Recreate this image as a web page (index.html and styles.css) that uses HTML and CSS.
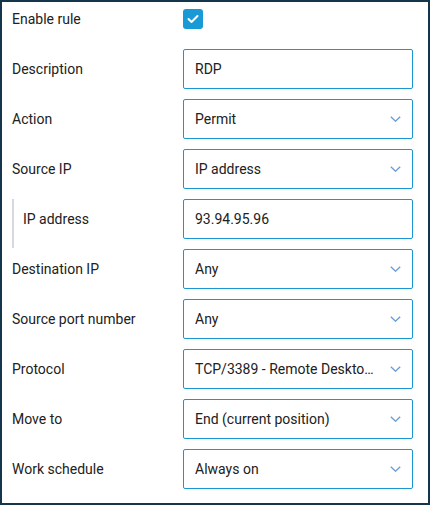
FILE: index.html
```html
<!DOCTYPE html>
<html>
<head>
<meta charset="utf-8">
<link rel="stylesheet" href="styles.css">
</head>
<body>
<div class="frame">
  <div class="row row-first">
    <div class="label">Enable rule</div>
    <div class="field">
      <span class="checkbox">
        <svg width="12" height="10" viewBox="0 0 12 10"><polyline points="1.5,5 4.5,8 10.5,2" fill="none" stroke="#fff" stroke-width="2" stroke-linecap="round" stroke-linejoin="round"/></svg>
      </span>
    </div>
  </div>
  <div class="row">
    <div class="label">Description</div>
    <div class="field"><div class="box"><span class="value">RDP</span></div></div>
  </div>
  <div class="row">
    <div class="label">Action</div>
    <div class="field"><div class="box select"><span class="value">Permit</span><svg class="chev" width="11" height="6" viewBox="0 0 11 6"><polyline points="0.8,0.8 5.5,5.2 10.2,0.8" fill="none" stroke="#6a9ad8" stroke-width="1.3"/></svg></div></div>
  </div>
  <div class="row">
    <div class="label">Source IP</div>
    <div class="field"><div class="box select"><span class="value">IP address</span><svg class="chev" width="11" height="6" viewBox="0 0 11 6"><polyline points="0.8,0.8 5.5,5.2 10.2,0.8" fill="none" stroke="#6a9ad8" stroke-width="1.3"/></svg></div></div>
  </div>
  <div class="row">
    <div class="label nested">IP address</div>
    <div class="field"><div class="box"><span class="value">93.94.95.96</span></div></div>
  </div>
  <div class="row">
    <div class="label">Destination IP</div>
    <div class="field"><div class="box select"><span class="value">Any</span><svg class="chev" width="11" height="6" viewBox="0 0 11 6"><polyline points="0.8,0.8 5.5,5.2 10.2,0.8" fill="none" stroke="#6a9ad8" stroke-width="1.3"/></svg></div></div>
  </div>
  <div class="row">
    <div class="label">Source port number</div>
    <div class="field"><div class="box select"><span class="value">Any</span><svg class="chev" width="11" height="6" viewBox="0 0 11 6"><polyline points="0.8,0.8 5.5,5.2 10.2,0.8" fill="none" stroke="#6a9ad8" stroke-width="1.3"/></svg></div></div>
  </div>
  <div class="row">
    <div class="label">Protocol</div>
    <div class="field"><div class="box select"><span class="value">TCP/3389 - Remote Desktop Protocol</span><svg class="chev" width="11" height="6" viewBox="0 0 11 6"><polyline points="0.8,0.8 5.5,5.2 10.2,0.8" fill="none" stroke="#6a9ad8" stroke-width="1.3"/></svg></div></div>
  </div>
  <div class="row">
    <div class="label">Move to</div>
    <div class="field"><div class="box select"><span class="value">End (current position)</span><svg class="chev" width="11" height="6" viewBox="0 0 11 6"><polyline points="0.8,0.8 5.5,5.2 10.2,0.8" fill="none" stroke="#6a9ad8" stroke-width="1.3"/></svg></div></div>
  </div>
  <div class="row">
    <div class="label">Work schedule</div>
    <div class="field"><div class="box select"><span class="value">Always on</span><svg class="chev" width="11" height="6" viewBox="0 0 11 6"><polyline points="0.8,0.8 5.5,5.2 10.2,0.8" fill="none" stroke="#6a9ad8" stroke-width="1.3"/></svg></div></div>
  </div>
</div>
</body>
</html>
```
FILE: styles.css
```css
* { box-sizing: border-box; }
html, body { margin: 0; padding: 0; background: #fff; }
body {
  font-family: Roboto, "Liberation Sans", sans-serif;
  font-size: 14px;
  color: #212121;
}
.frame {
  width: 430px;
  height: 505px;
  border: 2px solid #15354c;
  padding: 0 15px 14px 10px;
  display: flex;
  flex-direction: column;
  gap: 10px;
  background: #fff;
}
.row {
  display: flex;
  height: 40px;
  align-items: center;
}
.row-first {
  height: 37px;
  align-items: flex-start;
  padding-top: 7px;
}
.row-first .label { line-height: 20px; }
.label {
  width: 171px;
  flex: none;
  line-height: 20px;
}
.label.nested {
  align-self: flex-start;
  height: 49px;
  margin-bottom: -9px;
  border-left: 2px solid #d5d9df;
  padding-left: 9px;
  padding-bottom: 9px;
  display: flex;
  align-items: center;
}
.field { width: 230px; flex: none; }
.checkbox {
  width: 20px;
  height: 20px;
  border-radius: 3px;
  background: #189ad6;
  display: flex;
  align-items: center;
  justify-content: center;
}
.box {
  height: 40px;
  border: 1px solid #1996d3;
  border-radius: 2px;
  padding: 0 11px;
  display: flex;
  align-items: center;
}
.select { padding-right: 11px; }
.value {
  flex: 1;
  min-width: 0;
  white-space: nowrap;
  overflow: hidden;
  text-overflow: ellipsis;
}
.select .value { padding-right: 15px; }
.chev { flex: none; }
```
